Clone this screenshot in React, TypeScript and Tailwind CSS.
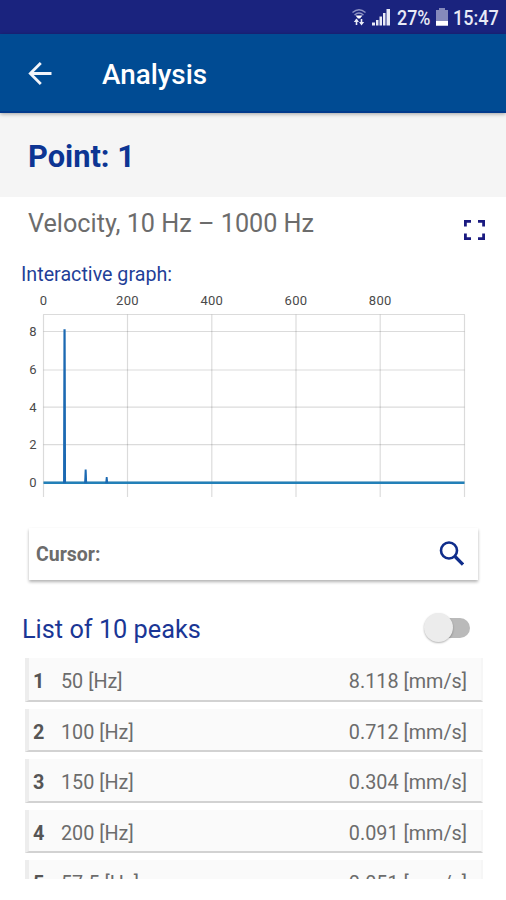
const peaks = [
  { f: '50', v: '8.118' },
  { f: '100', v: '0.712' },
  { f: '150', v: '0.304' },
  { f: '200', v: '0.091' },
  { f: '57.5', v: '0.051' },
];

const columns = [
  { x: 43.5, label: '0' },
  { x: 127.5, label: '200' },
  { x: 211.8, label: '400' },
  { x: 296, label: '600' },
  { x: 380.2, label: '800' },
  { x: 464.5, label: '' },
];

const lines = [
  { y: 76.5, label: '8' },
  { y: 115, label: '6' },
  { y: 152.2, label: '4' },
  { y: 189.6, label: '2' },
  { y: 227.2, label: '0' },
];

function StatusBar() {
  return (
    <div className="flex h-[34px] items-center justify-end bg-[#1a237e] pr-[7px] text-[21px] leading-none font-medium text-[#e8eaf6]">
      <svg className="mr-[5px]" width="16" height="18" viewBox="0 0 16 18" fill="none">
        <path d="M1.500 4.500Q8-1 14.500 4.500M3.500 7Q8 3.200 12.500 7" stroke="#8d92c4" strokeWidth="1.400" />
        <path d="M4.500 7.500h7L9 10.500H7z" fill="#fff" />
        <path d="M5.500 11.500v5.500M10.500 11v5" stroke="#e8eaf6" strokeWidth="1.600" />
        <path d="M2.800 14l2.700-3.500L8 14zM8 14h5.200l-2.700 3.500z" fill="#e8eaf6" />
      </svg>
      <svg className="mr-[7px]" width="18" height="18" viewBox="0 0 18 18" fill="#e8eaf6">
        <path d="M0 14.500h3v3H0zM4 12h2.500v5.500H4zM7.500 8.500H10v9H7.500zM11 5h2.500v12.500H11zM14.500 1H18v16.500h-3.500z" />
      </svg>
      <span className="inline-block w-[35px] pt-[2px] whitespace-nowrap">
        <span className="inline-block origin-left scale-x-[0.85]">27%</span>
      </span>
      <svg className="mr-[5px] ml-[4px]" width="12" height="18" viewBox="0 0 12 18">
        <path d="M3 0h6v2h3v16H0V2h3z" fill="#858abb" />
        <path d="M0 13h12v4.500H0z" fill="#fff" />
      </svg>
      <span className="inline-block w-[46px] pt-[2px] whitespace-nowrap">
        <span className="inline-block origin-left scale-x-[0.86]">15:47</span>
      </span>
    </div>
  );
}

function Chart() {
  return (
    <svg className="block" width="506" height="255" viewBox="0 0 506 255">
      <g fontSize="13" fill="#4a4a4a" fontFamily="Roboto, sans-serif">
        {columns.map((c) => (
          <text key={c.x} x={c.x} y="50" textAnchor="middle" letterSpacing="0.3">{c.label}</text>
        ))}
        {lines.map((l) => (
          <text key={l.y} x="36.500" y={l.y + 4.4} textAnchor="end">{l.label}</text>
        ))}
      </g>
      <g stroke="#000" strokeOpacity="0.140" strokeWidth="1.200">
        <path d="M43.500 59.500H464.500" />
        {columns.map((c) => (
          <path key={c.x} d={`M${c.x} 59.500V242`} />
        ))}
        {lines.map((l) => (
          <path key={l.y} d={`M43.500 ${l.y}H464.500`} />
        ))}
      </g>
      <path d="M43.500 227.700H464.500" stroke="#2380b8" strokeWidth="2.400" />
      <path
        d="M63.700 227.700L64.100 75H65L65.400 227.700ZM84.800 227.700L85.300 215.200H86L86.500 227.700ZM105.900 227.700L106.400 222.700H107L107.500 227.700Z"
        fill="#1c69b2"
        stroke="#1c69b2"
        strokeWidth="1.300"
      />
    </svg>
  );
}

export default function App() {
  return (
    <div className="flex h-[900px] w-[506px] flex-col overflow-hidden bg-white font-[Roboto,sans-serif] text-[#6c6c6c]">
      <StatusBar />
      <header className="z-10 flex h-[79px] shrink-0 items-center border-b-2 border-[#023a8c] bg-[#004b93] pl-[28px] text-white shadow-[0_1px_4px_rgba(0,0,0,0.35)]">
        <svg width="24" height="24" viewBox="0 0 24 24" fill="none" stroke="#f2f4fa" strokeWidth="2.800">
          <path d="M23.500 12.500H2.500M12.800 2L2.300 12.500L12.800 23" />
        </svg>
        <h1 className="ml-[50px] pt-[5px] text-[27.800px] leading-8 font-medium whitespace-nowrap">Analysis</h1>
      </header>
      <section className="flex h-[84px] shrink-0 items-center bg-[#f5f5f5] pl-[28px] text-[30.800px] font-bold text-[#0d3593]">
        <h2 className="pt-[4px] leading-9 whitespace-nowrap">Point: 1</h2>
      </section>
      <section className="flex h-[58px] shrink-0 justify-between pr-[21px] pl-[28px]">
        <p className="pt-[11px] text-[25.200px] leading-8 whitespace-nowrap">Velocity, 10 Hz – 1000 Hz</p>
        <svg className="mt-[23px]" width="21" height="20" viewBox="0 0 21 20" fill="none" stroke="#1a1a80" strokeWidth="2.800">
          <path d="M1.400 6.500V1.400H7M14 1.400h5.600V6.500M19.600 13.500v5.100H14M7 18.600H1.400V13.500" />
        </svg>
      </section>
      <section className="relative h-[255px] shrink-0">
        <p className="absolute top-[8px] left-[21px] text-[19.700px] leading-6 whitespace-nowrap text-[#1f3f98]">Interactive graph:</p>
        <Chart />
      </section>
      <section className="mt-[18px] ml-[29px] flex h-[52px] w-[449px] shrink-0 items-center justify-between bg-white pr-[14px] pb-px pl-[7px] shadow-[0_2px_3px_rgba(0,0,0,0.3)]">
        <span className="pt-[3px] text-[19.500px] font-bold whitespace-nowrap">Cursor:</span>
        <svg width="25" height="25" viewBox="0 0 25 25" fill="none" stroke="#0f2d8b">
          <circle cx="10" cy="9.500" r="8" strokeWidth="2.600" />
          <path d="M16 15.500L24 23.500" strokeWidth="3.200" />
        </svg>
      </section>
      <section className="mt-[28px] flex h-[42px] shrink-0 items-center justify-between pr-[36px] pl-[22px]">
        <h3 className="pt-[2px] text-[25.300px] leading-8 whitespace-nowrap text-[#1a3695]">List of 10 peaks</h3>
        <div className="mb-[3px] flex h-[20px] w-[44px] items-center rounded-full bg-[#bababa]">
          <div className="-ml-[2px] size-[29px] shrink-0 rounded-full bg-[#ececec] shadow-[0_1px_2px_rgba(0,0,0,0.3)]" />
        </div>
      </section>
      <section className="mt-[8px] ml-[25px] flex h-[221px] w-[458px] shrink-0 flex-col gap-[7px] overflow-hidden text-[19.800px]">
        {peaks.map((p, i) => (
          <div key={p.f} className="flex h-[43.600px] shrink-0 items-center border-r-2 border-b-2 border-l-4 border-r-[#f6f6f6] border-b-[#d2d2d2] border-l-[#ededed] bg-[#fafafa] pt-[6px] pr-[14px] pl-[4px] whitespace-nowrap">
            <span className="w-[28px] font-bold text-[#555]">{i + 1}</span>
            <span>{p.f} [Hz]</span>
            <span className="ml-auto">{p.v} [mm/s]</span>
          </div>
        ))}
      </section>
    </div>
  );
}
